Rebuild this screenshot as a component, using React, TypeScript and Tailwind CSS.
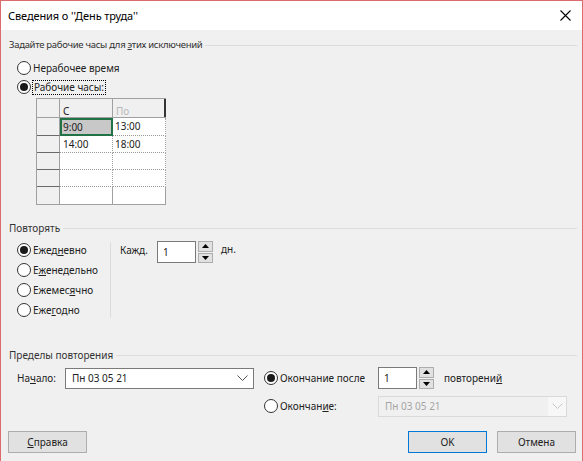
import React from "react";

const font = { fontFamily: '"Noto Sans", "Segoe UI", sans-serif' };

function Radio({ checked }: { checked?: boolean }) {
  return (
    <div className="w-[14px] h-[14px] rounded-full border border-[#333] bg-white flex items-center justify-center shrink-0">
      {checked && <div className="w-[8px] h-[8px] rounded-full bg-[#1a1a1a]" />}
    </div>
  );
}

function Spinner() {
  return (
    <div className="flex flex-col w-[15px] h-[22px] ml-[2px] gap-[1px] shrink-0">
      <div className="flex-1 bg-[#e1e1e1] border border-[#adadad] flex items-center justify-center">
        <svg width="7" height="4" viewBox="0 0 7 4"><path d="M0 4 L3.5 0 L7 4 Z" fill="#000" /></svg>
      </div>
      <div className="flex-1 bg-[#e1e1e1] border border-[#adadad] flex items-center justify-center">
        <svg width="7" height="4" viewBox="0 0 7 4"><path d="M0 0 L3.5 4 L7 0 Z" fill="#000" /></svg>
      </div>
    </div>
  );
}

function Chevron({ color = "#555" }: { color?: string }) {
  return (
    <svg width="11" height="6" viewBox="0 0 11 6"><path d="M0.5 0.5 L5.5 5.5 L10.5 0.5" stroke={color} fill="none" strokeWidth="1" /></svg>
  );
}

function Heading({ children, small }: { children: React.ReactNode; small?: boolean }) {
  return (
    <div className="flex items-center h-[16px] pl-[8px] pr-[5px] text-[#333]">
      <span className={small ? "leading-[16px] text-[9.5px] tracking-[-0.3px]" : "leading-[16px]"}>{children}</span>
      <div className="flex-1 h-px bg-[#dcdcdc] ml-[3px]" />
    </div>
  );
}

export default function App() {
  const rows = [
    ["9:00", "13:00"],
    ["14:00", "18:00"],
    ["", ""],
    ["", ""],
    ["", ""],
  ];
  const rowH = [18, 17, 17, 17, 17];
  return (
    <div
      style={font}
      className="w-[583px] h-[461px] bg-[#f0f0f0] border-l border-t border-r border-[#dc6b6b] flex flex-col text-[10px] text-[#222] overflow-hidden"
    >
      {/* Title bar */}
      <div className="h-[29px] bg-white flex items-center justify-between pl-[7px] pr-[11px] shrink-0">
        <span className="text-[11px] leading-[16px] tracking-[-0.1px] text-black mt-[1px]">Сведения о ''День труда''</span>
        <svg width="11" height="11" viewBox="0 0 11 11"><path d="M0.5 0.5 L10.5 10.5 M10.5 0.5 L0.5 10.5" stroke="#000" strokeWidth="1.1" /></svg>
      </div>

      <div className="mt-[7px]">
        <Heading small>
          Задайте рабочие часы для <u>э</u>тих исключений
        </Heading>
      </div>

      {/* radios */}
      <div className="mt-[7px] pl-[16px] flex items-center gap-[2px] h-[16px]">
        <Radio />
        <span className="leading-[16px]">Нерабочее время</span>
      </div>
      <div className="mt-[3px] pl-[16px] flex items-center gap-[1px] h-[16px]">
        <Radio checked />
        <span className="leading-[13px] border border-dotted border-black px-[1px]">Рабочие часы:</span>
      </div>

      {/* table */}
      <div className="mt-[3px] ml-[35px] w-[130px] border border-[#a0a0a0] border-r-0 bg-white">
        <div className="flex h-[19px] bg-[#f0f0f0] border-b border-[#a0a0a0]">
          <div className="w-[23px] border-r border-[#a0a0a0]" />
          <div className="w-[53px] border-r border-[#a0a0a0] pl-[3px] leading-[16px] pt-[4px] text-[#222]">С</div>
          <div className="w-[53px] border-r-2 border-[#333] pl-[3px] leading-[16px] pt-[4px] text-[#b8b8b8]">По</div>
        </div>
        {rows.map((r, i) => (
          <div key={i} className="flex" style={{ height: rowH[i] }}>
            <div
              className={
                "w-[23px] bg-[#f0f0f0] border-r border-[#a0a0a0] " +
                (i < rows.length - 1 ? "border-b border-b-[#6a6a6a]" : "")
              }
            />
            {i === 0 ? (
              <div className="w-[53px] bg-[#c8c8c8] border-2 border-[#217346] pl-[1px] leading-[14px] text-[#222]">
                {r[0]}
              </div>
            ) : (
              <div
                className={
                  "w-[53px] border-r border-[#a0a0a0] pl-[3px] leading-[16px] text-[#222] " +
                  (i < rows.length - 1 ? "border-b border-dotted border-b-[#999]" : "")
                }
              >
                {r[0]}
              </div>
            )}
            <div
              className={
                "w-[53px] border-r border-[#a0a0a0] pl-[2px] leading-[16px] text-[#222] " +
                (i < rows.length - 1 ? "border-b border-dotted border-b-[#999]" : "")
              }
            >
              {r[1]}
            </div>
          </div>
        ))}
      </div>

      {/* Повторять */}
      <div className="mt-[15px]">
        <Heading>Повторять</Heading>
      </div>
      <div className="flex mt-[6px]">
        <div className="flex flex-col pl-[16px] w-[109px] gap-[4px] shrink-0">
          <div className="flex items-center gap-[2px] h-[16px]">
            <Radio checked />
            <span>Ежед<u>н</u>евно</span>
          </div>
          <div className="flex items-center gap-[2px] h-[16px]">
            <Radio />
            <span>Е<u>ж</u>енедельно</span>
          </div>
          <div className="flex items-center gap-[2px] h-[16px]">
            <Radio />
            <span>Ежемес<u>я</u>чно</span>
          </div>
          <div className="flex items-center gap-[2px] h-[16px]">
            <Radio />
            <span>Еже<u>г</u>одно</span>
          </div>
        </div>
        <div className="w-px bg-[#dcdcdc] h-[76px]" />
        <div className="flex items-start ml-[9px] mt-[-1px]">
          <span className="leading-[16px] mt-[1px] w-[37px]">Кажд.</span>
          <div className="w-[39px] h-[22px] bg-white border border-[#7a7a7a] pl-[5px] leading-[20px]">1</div>
          <Spinner />
          <span className="ml-[8px] leading-[16px]">дн.</span>
        </div>
      </div>

      {/* Пределы */}
      <div className="mt-[29px]">
        <Heading>Пределы повторения</Heading>
      </div>
      <div className="flex items-center mt-[4px] h-[22px]">
        <span className="ml-[16px] w-[48px]">На<u>ч</u>ало:</span>
        <div className="w-[189px] h-[21px] bg-white border border-[#7a7a7a] flex items-center justify-between pl-[6px] pr-[5px]">
          <span>Пн 03 05 21</span>
          <Chevron />
        </div>
        <div className="ml-[10px] w-[114px] flex items-center gap-[2px]">
          <Radio checked />
          <span>Окончание после</span>
        </div>
        <div className="w-[39px] h-[22px] bg-white border border-[#7a7a7a] pl-[5px] leading-[20px]">1</div>
        <Spinner />
        <span className="ml-[10px]">повторени<u>й</u></span>
      </div>
      <div className="flex items-center mt-[7px] h-[20px]">
        <div className="ml-[263px] flex items-center gap-[2px] w-[114px]">
          <Radio />
          <span>Окончан<u>и</u>е:</span>
        </div>
        <div className="w-[189px] h-[21px] bg-[#f0f0f0] border border-[#d9d9d9] flex items-center">
          <span className="flex-1 pl-[6px] text-[#a5a5a5]">Пн 03 05 21</span>
          <div className="w-[18px] h-full bg-[#f7f7f7] flex items-center justify-center">
            <Chevron color="#c8c8c8" />
          </div>
        </div>
      </div>

      {/* buttons */}
      <div className="flex items-center mt-[15px] pl-[7px] pr-[6px]">
        <div className="w-[79px] h-[22px] bg-[#e1e1e1] border border-[#adadad] flex items-center justify-center">
          <span><u>С</u>правка</span>
        </div>
        <div className="ml-auto w-[79px] h-[22px] bg-[#e1e1e1] border border-[#0078d7] flex items-center justify-center">
          OK
        </div>
        <div className="ml-[10px] w-[79px] h-[22px] bg-[#e1e1e1] border border-[#adadad] flex items-center justify-center">
          Отмена
        </div>
      </div>
    </div>
  );
}
